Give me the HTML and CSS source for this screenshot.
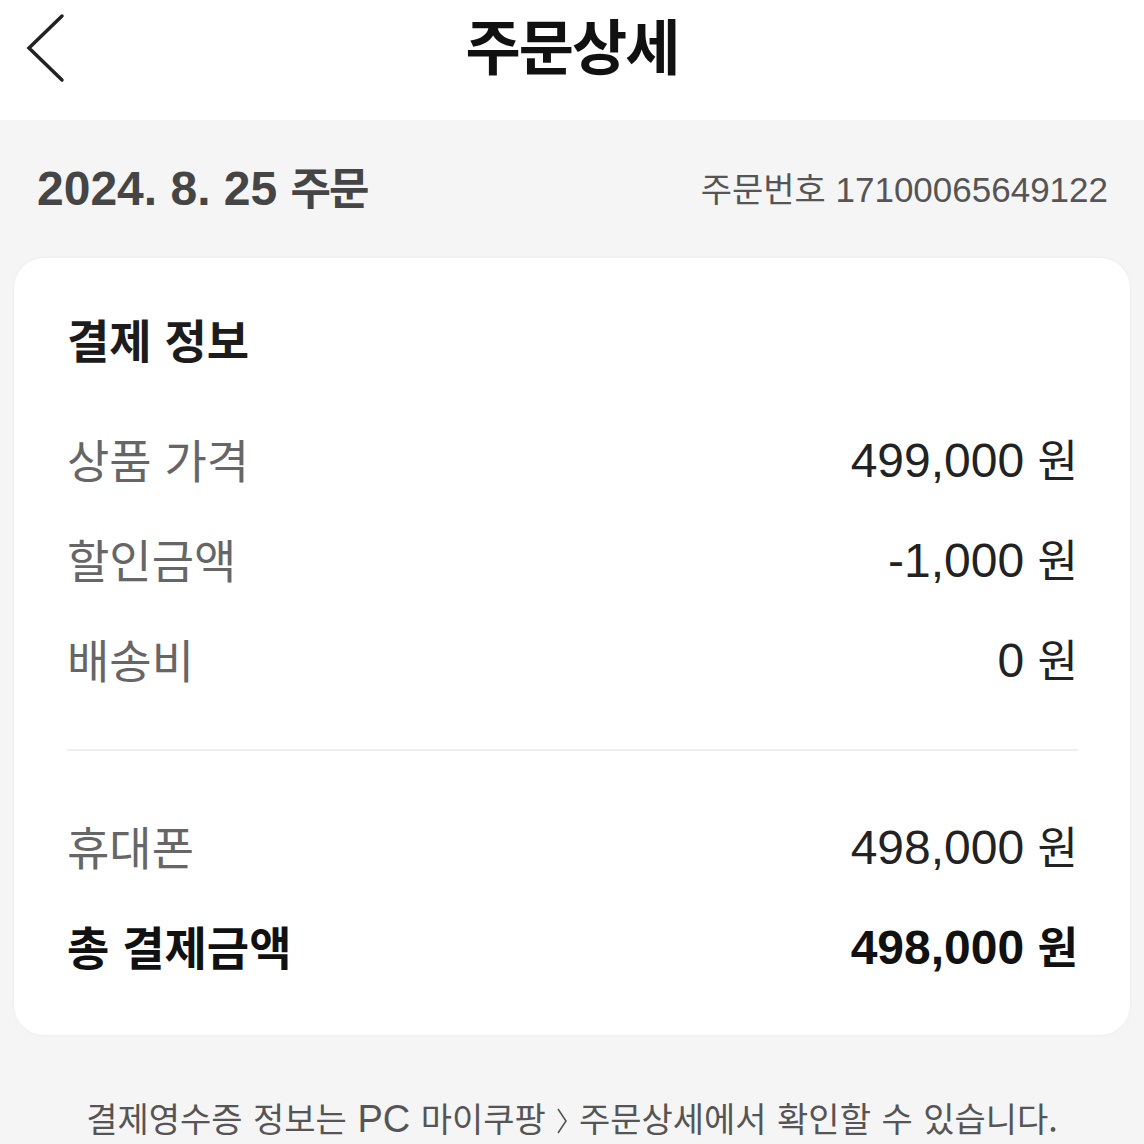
FILE: index.html
```html
<!DOCTYPE html>
<html lang="ko">
<head>
<meta charset="utf-8">
<title>주문상세</title>
<link rel="stylesheet" href="styles.css">
</head>
<body>
<div class="screen">
  <header class="topbar">
    <div class="back">
      <svg width="40" height="70" viewBox="0 0 40 70"><path d="M36 3 L3 35 L36 67" fill="none" stroke="#222" stroke-width="3.5" stroke-linecap="round" stroke-linejoin="miter"/></svg>
    </div>
    <h1 class="title">주문상세</h1>
    <div></div>
  </header>
  <main class="content">
    <div class="order-meta">
      <div class="order-date"><span class="lat">2024. 8. 25</span> <span class="ko">주문</span></div>
      <div class="order-no"><span class="ko">주문번호</span> <span class="lat">17100065649122</span></div>
    </div>
    <section class="card">
      <h2 class="card-title">결제 정보</h2>
      <div class="row"><span class="label">상품 가격</span><span class="value"><span class="num">499,000</span> <span class="won">원</span></span></div>
      <div class="row"><span class="label">할인금액</span><span class="value"><span class="num">-1,000</span> <span class="won">원</span></span></div>
      <div class="row"><span class="label">배송비</span><span class="value"><span class="num">0</span> <span class="won">원</span></span></div>
      <hr class="divider">
      <div class="row"><span class="label">휴대폰</span><span class="value"><span class="num">498,000</span> <span class="won">원</span></span></div>
      <div class="row total"><span class="label">총 결제금액</span><span class="value"><span class="num">498,000</span> <span class="won">원</span></span></div>
    </section>
    <p class="notice">결제영수증 정보는 <span class="lat">PC</span> 마이쿠팡 <svg class="gt" width="12" height="28" viewBox="0 0 12 28"><path d="M2 2 L10 14 L2 26" fill="none" stroke="#555" stroke-width="1.6"/></svg> 주문상세에서 확인할 수 있습니다.</p>
  </main>
</div>
</body>
</html>
```

FILE: styles.css
```css
html, body {
  margin: 0;
  padding: 0;
}
body {
  background: #f5f5f5;
  font-family: "Liberation Sans", "Noto Sans CJK KR", sans-serif;
  color: #222;
}
.screen {
  width: 1144px;
  min-height: 1144px;
}
.topbar {
  height: 120px;
  background: #fff;
  display: grid;
  grid-template-columns: 1fr auto 1fr;
  align-items: start;
}
.back {
  padding: 13px 0 0 26px;
}
.back svg {
  display: block;
}
.title {
  margin: 0;
  padding-top: 14px;
  font-family: "Noto Sans CJK KR", sans-serif;
  font-size: 60px;
  line-height: 60px;
  font-weight: 700;
  letter-spacing: -2px;
  color: #111;
}
.ko {
  font-family: "Noto Sans CJK KR", sans-serif;
}
.lat {
  font-family: "Liberation Sans", sans-serif;
}
.order-meta {
  height: 138px;
  display: flex;
  justify-content: space-between;
  align-items: center;
  padding: 0 36px 0 37px;
}
.order-date {
  font-weight: 700;
  color: #454545;
  font-size: 48px;
  line-height: 1.2;
}
.order-date .ko {
  font-size: 44px;
  letter-spacing: -2px;
}
.order-no {
  color: #555;
  font-size: 35px;
  line-height: 1.2;
}
.order-no .ko {
  font-size: 34px;
  letter-spacing: 0;
}
.card {
  margin: 0 14px;
  background: #fff;
  border-radius: 30px;
  padding: 30px 52px 40px 53px;
  box-shadow: 0 0 3px rgba(0, 0, 0, 0.06);
}
.card-title {
  margin: 0 0 20px;
  height: 100px;
  display: flex;
  align-items: center;
  font-family: "Noto Sans CJK KR", sans-serif;
  font-size: 46px;
  font-weight: 700;
  letter-spacing: 0;
  color: #1c1c1c;
}
.row {
  height: 100px;
  display: flex;
  align-items: center;
  justify-content: space-between;
}
.label {
  font-family: "Noto Sans CJK KR", sans-serif;
  font-size: 46px;
  letter-spacing: 0;
  color: #666;
}
.value {
  font-size: 48px;
  color: #222;
  white-space: nowrap;
}
.num {
  font-family: "Liberation Sans", sans-serif;
}
.won {
  font-family: "Noto Sans CJK KR", sans-serif;
  font-size: 44px;
}
.row.total .label,
.row.total .value {
  font-weight: 700;
  color: #111;
}
.divider {
  border: 0;
  height: 2px;
  background: #efefef;
  margin: 41px 0 44px;
}
.notice {
  margin: 58px 0 0;
  text-align: center;
  font-family: "Noto Sans CJK KR", sans-serif;
  font-size: 34px;
  letter-spacing: 0;
  word-spacing: 1px;
  color: #555;
}
.notice .lat {
  font-size: 38px;
}
.gt {
  vertical-align: -3px;
}
```
